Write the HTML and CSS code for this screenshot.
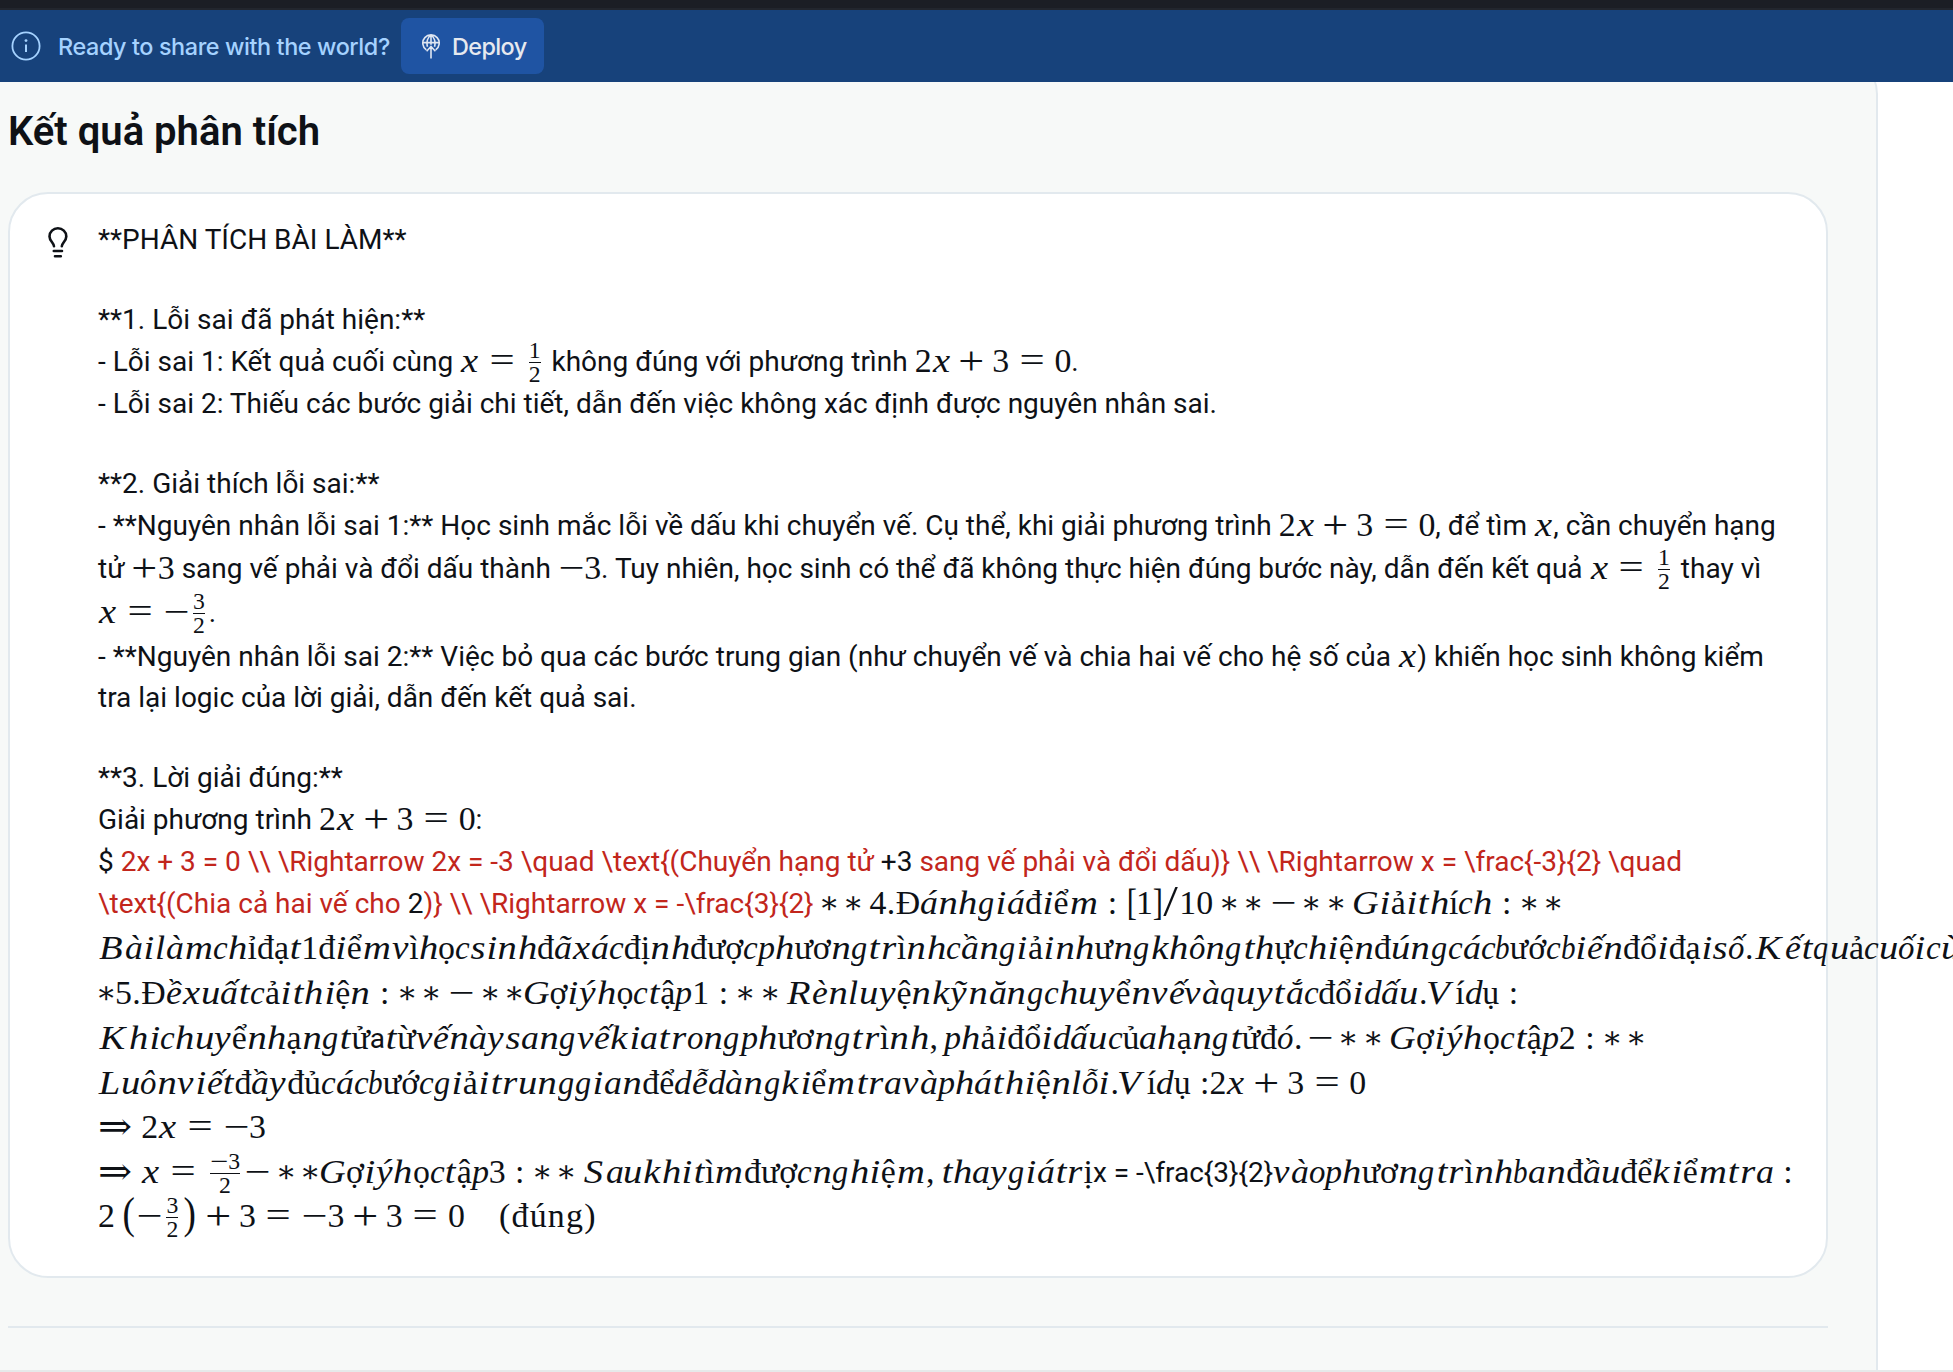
FILE: index.html
```
<!DOCTYPE html>
<html lang="vi">
<head>
<meta charset="utf-8">
<title>Kết quả phân tích</title>
<link rel="stylesheet" href="styles.css">
</head>
<body>
<header class="topbar">
  <svg class="info" viewBox="0 0 30 30" fill="none" stroke="#a5d2ff" stroke-width="1.8"><circle cx="15" cy="15" r="13.6"/><path d="M15 13.5v7.5" stroke-width="2"/><circle cx="15" cy="9.600" r="1.400" fill="#a5d2ff" stroke="none"/></svg>
  <span class="ready">Ready to share with the world?</span>
  <button class="deploy">
    <svg class="globe" viewBox="0 0 18 25" fill="none" stroke="#dfe6f2" stroke-width="1.600"><path d="M4.300 15.800A8.200 8.200 0 1 1 13.700 15.800M1 8.600h16M9 .8v10M5.500 12.800C4.200 8 5.500 3 9 1c3.500 2 4.800 7 3.500 11.800M9 24.500V12.500M4.600 17.200 9 12.500 13.400 17.200"/></svg>
    <span>Deploy</span>
  </button>
</header>
<main class="panel">
  <h1>Kết quả phân tích</h1>
  <section class="card">
    <svg class="bulb" viewBox="0 0 20 31" fill="none" stroke="#0e1116" stroke-width="2.600" stroke-linecap="round"><path d="M6 19.200C6 16 1.500 14 1.500 9.400a8.300 8 0 0 1 16.800 0C18.300 14 13.800 16 13.800 19.200"/><path d="M5.800 24h8.200M7 29.300h5.800"/></svg>
    <div class="body">
      <div class="line gap">**PHÂN TÍCH BÀI LÀM**</div>
      <div class="line l42">**1. Lỗi sai đã phát hiện:**</div>
      <div class="line l42">- Lỗi sai 1: Kết quả cuối cùng <span class="m">x = </span><span class="frac"><span>1</span><span>2</span></span> không đúng với phương trình <span class="m">2x + 3 = 0</span>.</div>
      <div class="line gap">- Lỗi sai 2: Thiếu các bước giải chi tiết, dẫn đến việc không xác định được nguyên nhân sai.</div>
      <div class="line l42">**2. Giải thích lỗi sai:**</div>
      <div class="line l43">- **Nguyên nhân lỗi sai 1:** Học sinh mắc lỗi về dấu khi chuyển vế. Cụ thể, khi giải phương trình <span class="m">2x + 3 = 0</span>, để tìm <span class="m">x</span>, cần chuyển hạng</div>
      <div class="line l44">tử <span class="m">+3</span> sang vế phải và đổi dấu thành <span class="m">−3</span>. Tuy nhiên, học sinh có thể đã không thực hiện đúng bước này, dẫn đến kết quả <span class="m">x = </span><span class="frac"><span>1</span><span>2</span></span> thay vì</div>
      <div class="line l44"><span class="m">x = −</span><span class="frac"><span>3</span><span>2</span></span>.</div>
      <div class="line l41">- **Nguyên nhân lỗi sai 2:** Việc bỏ qua các bước trung gian (như chuyển vế và chia hai vế cho hệ số của <span class="m">x</span>) khiến học sinh không kiểm</div>
      <div class="line gap">tra lại logic của lời giải, dẫn đến kết quả sai.</div>
      <div class="line l42">**3. Lời giải đúng:**</div>
      <div class="line l42">Giải phương trình <span class="m">2x + 3 = 0</span>:</div>
      <div class="line l42">$ <span class="err">2x + 3 = 0 \\ \Rightarrow 2x = -3 \quad \text{(Chuyển hạng tử <b>+3</b> sang vế phải và đổi dấu)} \\ \Rightarrow x = \frac{-3}{2} \quad</span></div>
      <div class="line l45"><span class="err">\text{(Chia cả hai vế cho <b>2</b>)} \\ \Rightarrow x = -\frac{3}{2}</span> <span class="m">∗ ∗ 4.Đánhgiáđiểm : [1]/10 ∗ ∗ − ∗ ∗ Giảithích : ∗ ∗</span></div>
      <div class="line l45"><span class="m">Bàilàmchỉđạt1điểmvìhọcsinhđãxácđịnhđượcphươngtrìnhcầngiảinhưngkhôngthựchiệnđúngcácbướcbiếnđổiđạisố.Kếtquảcuốicùng</span></div>
      <div class="line l45"><span class="m">∗5.Đềxuấtcảithiện : ∗ ∗ − ∗ ∗Gợiýhọctập1 : ∗ ∗ Rènluyệnkỹnăngchuyểnvếvàquytắcđổidấu.Vídụ :</span></div>
      <div class="line l45"><span class="m">Khichuyểnhạngtử</span>a<span class="m">từvếnàysangvếkiatrongphươngtrình, phảiđổidấucủahạngtửđó. − ∗ ∗ Gợiýhọctập2 : ∗ ∗</span></div>
      <div class="line l44"><span class="m">Luônviếtđầyđủcácbướcgiảitrunggianđểdễdàngkiểmtravàpháthiệnlỗi.Vídụ :</span><span class="m">2x + 3 = 0</span></div>
      <div class="line l45"><span class="m">⇒ 2x = −3</span></div>
      <div class="line l44"><span class="m">⇒ x = </span><span class="frac"><span class="m">−3</span><span>2</span></span><span class="m">− ∗ ∗Gợiýhọctập3 : ∗ ∗ Saukhitìmđượcnghiệm, thaygiátrị</span>x = -\frac{3}{2}<span class="m">vàophươngtrìnhbanđầuđểkiểmtra :</span></div>
      <div class="line"><span class="m">2</span><span class="big open">(</span><span class="m">−</span><span class="frac"><span>3</span><span>2</span></span><span class="big">)</span><span class="m"> + 3 = −3 + 3 = 0</span><span class="roman">(đúng)</span></div>
    </div>
  </section>
  <hr>
</main>
<script src="math.js"></script>
</body>
</html>
```
FILE: styles.css
```
* { box-sizing: border-box; }
html, body { margin: 0; height: 1372px; overflow: hidden; }
body {
  background: #fff;
  color: #0e1116;
  font: 28px/40px Roboto, "Noto Sans", sans-serif;
  display: flex;
  flex-direction: column;
  border-bottom: 2px solid #e6e9ea;
}
.topbar {
  flex: none;
  position: relative;
  z-index: 1;
  height: 82px;
  display: flex;
  align-items: center;
  padding: 10px 0 0 11px;
  background: linear-gradient(#1b1e25 8px, #22262e 8px, #22262e 10px, #17427b 10px);
  color: #a5d2ff;
  font-family: Inter, sans-serif;
}
.info { width: 30px; height: 30px; margin-right: 17px; }
.ready { width: 343px; padding-top: 2px; font-size: 23.4px; font-weight: 450; letter-spacing: -0.4px; white-space: nowrap; }
.deploy {
  display: flex;
  align-items: center;
  gap: 12px;
  width: 143px;
  height: 56px;
  padding: 0 0 0 21px;
  border: 0;
  border-radius: 8px;
  background: #1f54a3;
  color: #e6e9ef;
  font: 450 23.4px Inter, sans-serif;
  letter-spacing: -0.6px;
}
.deploy span { padding-top: 1px; }
.globe { width: 18px; height: 25px; }
.panel {
  flex: none;
  width: 1878px;
  height: 1340px;
  margin-top: -28px;
  padding: 0 48px 0 8px;
  border-right: 2px solid #e2e9ee;
  border-top-right-radius: 40px;
  background: #f7f9f8;
}
h1 { margin: 0; padding-top: 54px; height: 138px; font-size: 40px; line-height: 48px; font-weight: 600; }
.card {
  display: flex;
  width: 1820px;
  height: 1086px;
  padding: 26px 0 0 38px;
  border: 2px solid #e2e9ee;
  border-radius: 40px;
  background: #fff;
}
.bulb { flex: none; width: 20px; height: 31px; margin: 7px 30px 0 0; }
.body { white-space: nowrap; }
.line { height: 40px; }
.gap { height: 80px; }
.l41 { height: 41px; }
.l42 { height: 42px; }
.l43 { height: 43px; }
.l44 { height: 44px; }
.l45 { height: 45px; }
.err { color: #c2261c; }
.err b { color: #0e1116; font-weight: 400; }
.m, .frac, .big, .roman {
  font-family: "Liberation Serif", "DejaVu Serif", serif;
  font-size: 33.88px;
  line-height: 0;
  font-kerning: none;
  font-variant-ligatures: none;
  white-space: pre;
}
.m i { display: inline-block; vertical-align: -1px; transform-origin: 0 .085em; }
.m i.up { font-style: normal; }
.frac {
  display: inline-flex;
  flex-direction: column;
  align-items: center;
  margin: -4px 4px 0;
  height: 24px;
  font-size: 23.7px;
  line-height: 20px;
  vertical-align: 13px;
}
.frac span:first-child { font-size: 23.7px; line-height: 20px; padding-bottom: 2px; border-bottom: 1px solid #0e1116; }
.frac .m i { vertical-align: baseline; }
.frac span:last-child { margin-top: 1px; }
.big { display: inline-block; width: 15.5px; text-align: center; transform: scale(1.1, 1.32); transform-origin: 50% .13em; }
.open { margin-left: 5.6px; }
.roman { margin-left: 34px; letter-spacing: 1.27px; vertical-align: -1px; }
hr { width: 1820px; height: 2px; margin: 48px 0 0; border: 0; background: #e2e9ee; }
```
FILE: math.js
```
// Advance widths (in em) of the math alphabet.
const W = {
  a: .529, b: .429, c: .433, d: .52, e: .466, f: .49, g: .477, h: .576, i: .345, k: .521,
  l: .298, m: .878, n: .6, o: .485, p: .503, q: .446, r: .451, s: .469, t: .361, u: .572,
  v: .485, x: .572, y: .49, B: .759, G: .786, K: .849, L: .681, R: .759, S: .613, V: .583,
  '+': .778, '−': .778, '=': .778, '∗': .5, ':': .278, '.': .278, ',': .278, '[': .278,
  ']': .278, '/': .5, '⇒': 1
};
// Italic correction added after a letter.
const C = {
  f: .108, g: .036, k: .031, l: .02, q: .036, r: .028, v: .036, y: .036,
  B: .05, K: .071, R: .008, S: .058, V: .222
};
// Glyph stretch for symbols that are drawn wider than the text font has them.
const SCALE = {
  '+': [1.36, 1.2], '−': [1.36, 1], '=': [1.32, 1.05], '⇒': [1.2, 1.1], '∗': [.9, .9],
  '/': [1.55, 1.3], '[': [.9, 1.15], ']': [.9, 1.15], V: [1.15, 1]
};
const ITALIC = 'àáâãèéêếềễấầắăốỗồôóýỹúù';
const REL = '=:⇒';
const ctx = document.createElement('canvas').getContext('2d');

for (const run of document.querySelectorAll('.m')) {
  const chars = [...run.textContent.normalize('NFC')];
  run.textContent = '';
  chars.forEach((ch, k) => {
    const italic = /[A-Za-z]/.test(ch) || ITALIC.includes(ch);
    const base = italic ? ch.normalize('NFD')[0] : ch;
    ctx.font = (italic ? 'italic ' : '') + '100px "Liberation Serif", "DejaVu Serif", serif';
    const natural = ctx.measureText(ch).width / 100;
    let want = W[base] || natural;
    if (ch === ' ') {
      const prev = chars[k - 1] || '', next = chars[k + 1] || '';
      want = prev === '.' ? .111 : prev === ',' ? .167
        : (prev && REL.includes(prev)) || (next && REL.includes(next)) ? .278 : .222;
    }
    const el = document.createElement('i');
    if (!italic) el.className = 'up';
    el.textContent = ch;
    el.style.width = (want + (italic && C[base] || 0)).toFixed(4) + 'em';
    const [sx, sy] = SCALE[ch] || [italic ? Math.min(1.14, want / natural) : 1, 1];
    const shift = (want - natural * sx) / 2;
    if (ch !== ' ') el.style.transform = `translateX(${shift.toFixed(4)}em) scale(${sx.toFixed(3)}, ${sy})`;
    run.append(el);
  });
}
```
